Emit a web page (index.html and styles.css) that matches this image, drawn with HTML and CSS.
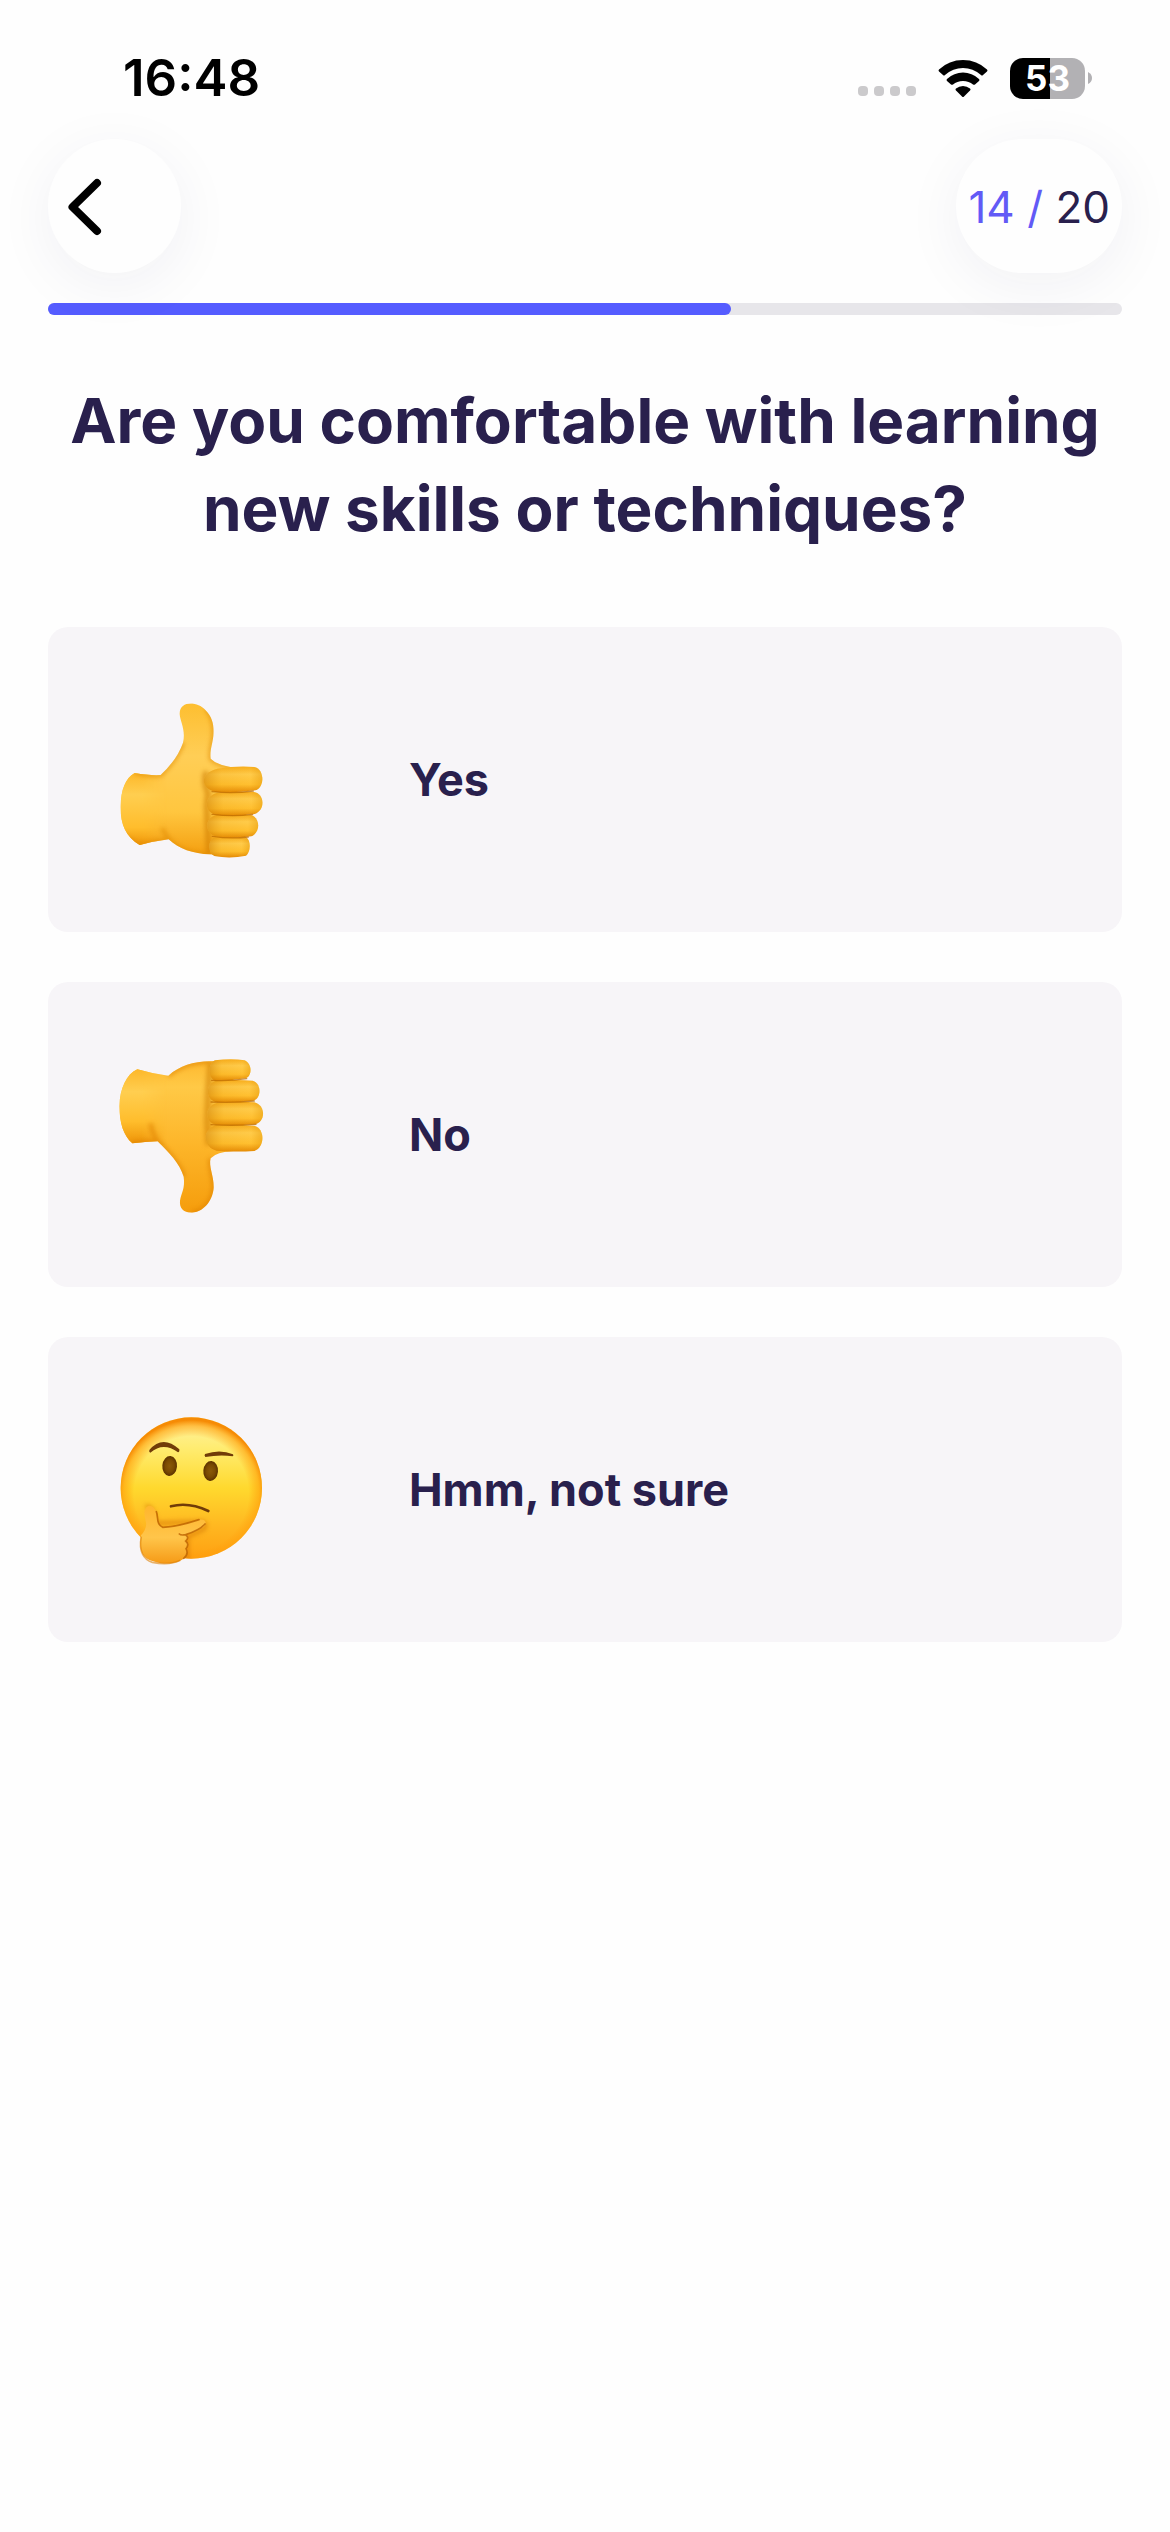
FILE: index.html
```html
<!DOCTYPE html>
<html lang="en">
<head>
<meta charset="utf-8">
<meta name="viewport" content="width=device-width, initial-scale=1">
<title>Question 14</title>
<link rel="stylesheet" href="styles.css">
</head>
<body>
<header class="status">
  <time class="clock">16:48</time>
  <div class="indicators">
    <span class="signal"><i class="dot"></i><i class="dot"></i><i class="dot"></i><i class="dot"></i></span>
    <svg class="wifi" viewBox="0 0 50 38" aria-hidden="true">
      <path d="M1 10.500Q0 11.500 1 12.500L5 16Q6 17 7 16Q15 9 25 9T43 16Q44 17 45 16L49 12.500Q50 11.500 49 10.500Q39 1 25 1T1 10.500Z"/>
      <path d="M9 20Q8 21 9 22L13 25.500Q14 26 15 25.500Q19 22 25 22T35 25.500Q36 26 37 25.500L41 22Q42 21 41 20Q34 13.500 25 13.500T9 20Z"/>
      <path d="M18 29.500Q17 30.500 18 31.500L24 37.500Q25 38.500 26 37.500L32 31.500Q33 30.500 32 29.500Q29 27 25 27T18 29.500Z"/>
    </svg>
    <span class="battery"><span class="level">53</span><svg class="nub" viewBox="0 0 4 12" aria-hidden="true"><path d="M0 0Q4 2 4 6T0 12Z"/></svg></span>
  </div>
</header>
<main class="page">
  <nav class="topbar">
    <button class="back" type="button" aria-label="Back">
      <svg class="chevron" viewBox="0 0 34 58" aria-hidden="true"><path d="M29 5 4.500 29 29 53"/></svg>
    </button>
    <p class="counter"><span class="current">14 /</span> 20</p>
  </nav>
  <div class="progress" role="progressbar" aria-label="Progress" aria-valuemin="0" aria-valuemax="11" aria-valuenow="7"><div class="fill" style="width:63.6%"></div></div>
  <h1 class="question">Are you comfortable with learning new skills or techniques?</h1>
  <div class="options">
    <button class="option" type="button">
      <svg class="emoji" viewBox="0 0 570 600" aria-hidden="true">
        <defs>
          <linearGradient id="skin" x1="0" y1="0" x2="0" y2="1"><stop offset="0" stop-color="#fdbd2e"/><stop offset=".35" stop-color="#ffce56"/><stop offset=".7" stop-color="#ffc63f"/><stop offset="1" stop-color="#f39a0a"/></linearGradient>
          <linearGradient id="cuff" gradientUnits="userSpaceOnUse" x1="0" y1="279" x2="0" y2="497"><stop offset="0" stop-color="#fdb82a"/><stop offset=".3" stop-color="#ffce50"/><stop offset=".75" stop-color="#ffbd2c"/><stop offset="1" stop-color="#ee9408"/></linearGradient>
          <linearGradient id="cuff-fade"><stop offset=".5" stop-color="#fff"/><stop offset="1" stop-color="#fff" stop-opacity="0"/></linearGradient>
          <mask id="cuff-mask"><path d="M50 60H200V540H50Z" fill="url(#cuff-fade)"/></mask>
          <linearGradient id="finger" x1="0" y1="0" x2="0" y2="1"><stop offset="0" stop-color="#f8ad1c"/><stop offset=".3" stop-color="#ffcb4a"/><stop offset=".7" stop-color="#ffbf2f"/><stop offset="1" stop-color="#e58a05"/></linearGradient>
          <linearGradient id="knuckle"><stop offset="0" stop-color="#c97800" stop-opacity=".5"/><stop offset=".3" stop-color="#e09000" stop-opacity=".12"/><stop offset=".8" stop-color="#e09000" stop-opacity="0"/><stop offset="1" stop-color="#e09000" stop-opacity=".4"/></linearGradient>
          <filter id="soft" filterUnits="userSpaceOnUse" x="0" y="0" width="570" height="600"><feGaussianBlur stdDeviation="7"/></filter>
          <clipPath id="palm-up"><path d="M104 279Q150 287 182 285Q232 238 249 188C258 150 240 124 239 102C238 62 292 63 316 90C340 114 342 140 340 168C337 195 329 212 332 236Q350 254 392 261L400 528L330 523C280 522 235 506 206 478Q160 484 119 495C76 468 61 432 62 378C63 330 76 294 104 279Z"/></clipPath>
        </defs>
        <g clip-path="url(#palm-up)">
          <path fill="url(#skin)" d="M50 60H410V540H50Z"/>
          <path fill="url(#cuff)" mask="url(#cuff-mask)" d="M50 270H200V500H50Z"/>
          <path fill="none" stroke="#df8800" stroke-width="12" opacity=".6" filter="url(#soft)" d="M104 277Q150 289 182 285Q232 238 249 188M318 85C340 114 342 140 340 168C337 195 329 212 332 236Q350 254 392 261M186 445Q204 480 232 500C265 522 300 523 335 525M70 470L119 495L206 478"/>
          <path fill="none" stroke="#ce7c00" stroke-width="18" opacity=".6" filter="url(#soft)" d="M320 275Q308 300 324 340L320 380L327 520"/>
        </g>
        <g fill="url(#finger)">
          <path d="M365 472H438C454 480 452 518 438 527Q390 537 343 528C324 520 323 482 340 474Z"/>
          <path d="M350 405H454C481 414 482 458 454 469Q400 477 345 469C312 455 314 413 350 405Z"/>
          <path d="M350 339Q410 332 462 336C494 341 497 391 464 402Q400 411 346 404C311 393 311 350 350 339Z"/>
          <path d="M352 266Q415 256 463 261C493 267 496 321 466 331Q400 340 346 336C299 323 299 279 352 266Z"/>
        </g>
        <g fill="url(#knuckle)">
          <path d="M365 472H438C454 480 452 518 438 527Q390 537 343 528C324 520 323 482 340 474Z"/>
          <path d="M350 405H454C481 414 482 458 454 469Q400 477 345 469C312 455 314 413 350 405Z"/>
          <path d="M350 339Q410 332 462 336C494 341 497 391 464 402Q400 411 346 404C311 393 311 350 350 339Z"/>
          <path d="M352 266Q415 256 463 261C493 267 496 321 466 331Q400 340 346 336C299 323 299 279 352 266Z"/>
        </g>
        <g fill="none" stroke="#bd6c00" stroke-width="4" stroke-linecap="round" opacity=".75"><path d="M336 335Q400 342 460 333M336 403Q400 411 458 403M337 469Q390 477 445 471"/></g>
      </svg>
      <span class="label">Yes</span>
    </button>
    <button class="option" type="button">
      <svg class="emoji" viewBox="0 0 570 600" aria-hidden="true">
        <defs>
          <linearGradient id="skin-down" x1="0" y1="0" x2="0" y2="1"><stop offset="0" stop-color="#fdb52a"/><stop offset=".2" stop-color="#ffc946"/><stop offset=".55" stop-color="#fdb62a"/><stop offset="1" stop-color="#f59c0b"/></linearGradient>
          <linearGradient id="cuff-down" gradientUnits="userSpaceOnUse" x1="0" y1="103" x2="0" y2="326"><stop offset="0" stop-color="#fdb82a"/><stop offset=".3" stop-color="#ffce50"/><stop offset=".7" stop-color="#ffbd2c"/><stop offset="1" stop-color="#ee9408"/></linearGradient>
          <clipPath id="palm-down"><path d="M112 103Q155 116 205 122C240 92 278 80 330 79L400 76L400 348Q350 350 332 370C325 394 342 423 341 457C340 488 318 530 276 533C248 533 238 517 240 497C243 475 256 461 251 425C240 387 207 352 173 319Q135 321 97 325C70 302 59 264 58 214C60 160 79 118 112 103Z"/></clipPath>
        </defs>
        <g clip-path="url(#palm-down)">
          <path fill="url(#skin-down)" d="M50 60H410V540H50Z"/>
          <path fill="url(#cuff-down)" mask="url(#cuff-mask)" d="M50 95H200V330H50Z"/>
          <path fill="none" stroke="#df8200" stroke-width="14" opacity=".6" filter="url(#soft)" d="M205 122C240 92 278 80 335 79M152 265Q155 294 173 319C207 352 240 387 251 425M332 370C325 394 342 423 341 457C340 488 318 530 276 533M97 325L173 319"/>
          <path fill="none" stroke="#ce7c00" stroke-width="20" opacity=".55" filter="url(#soft)" d="M332 85L325 160L322 260L326 330"/>
        </g>
        <g fill="url(#finger)">
          <path d="M345 76Q395 69 434 76C457 86 457 124 437 130Q390 138 345 137C324 130 322 86 345 76Z"/>
          <path d="M348 137Q410 133 458 137C486 146 484 190 460 197Q400 205 347 201C315 191 316 146 348 137Z"/>
          <path d="M350 204Q415 198 463 202C497 210 498 260 465 268Q400 274 347 269C313 260 313 213 350 204Z"/>
          <path d="M348 270Q410 268 463 272C495 280 496 337 463 348Q405 352 350 347C309 336 304 285 348 270Z"/>
        </g>
        <g fill="url(#knuckle)">
          <path d="M345 76Q395 69 434 76C457 86 457 124 437 130Q390 138 345 137C324 130 322 86 345 76Z"/>
          <path d="M348 137Q410 133 458 137C486 146 484 190 460 197Q400 205 347 201C315 191 316 146 348 137Z"/>
          <path d="M350 204Q415 198 463 202C497 210 498 260 465 268Q400 274 347 269C313 260 313 213 350 204Z"/>
          <path d="M348 270Q410 268 463 272C495 280 496 337 463 348Q405 352 350 347C309 336 304 285 348 270Z"/>
        </g>
        <g fill="none" stroke="#bd6c00" stroke-width="4" stroke-linecap="round" opacity=".75"><path d="M335 136Q390 139 440 131M333 201Q400 204 463 198M333 269Q400 273 468 268"/></g>
      </svg>
      <span class="label">No</span>
    </button>
    <button class="option" type="button">
      <svg class="emoji" viewBox="0 -15 570 600" aria-hidden="true">
        <defs>
          <linearGradient id="face" x1="0" y1="0" x2="0" y2="1"><stop offset="0" stop-color="#fff3a6"/><stop offset=".22" stop-color="#ffec70"/><stop offset=".5" stop-color="#ffd92e"/><stop offset=".78" stop-color="#ffb620"/><stop offset="1" stop-color="#ffa010"/></linearGradient>
          <radialGradient id="rim" cx=".5" cy=".54" r=".52"><stop offset=".78" stop-color="#ff9a08" stop-opacity="0"/><stop offset=".92" stop-color="#ff9f0c" stop-opacity=".6"/><stop offset="1" stop-color="#f68b05"/></radialGradient>
          <linearGradient id="hand" x1="0" y1="0" x2="0" y2="1"><stop offset="0" stop-color="#ffb52c"/><stop offset=".55" stop-color="#ffc54a"/><stop offset="1" stop-color="#f69a16"/></linearGradient>
          <radialGradient id="eye"><stop offset="0" stop-color="#8a5908"/><stop offset=".6" stop-color="#7a4a02"/><stop offset="1" stop-color="#5c3200"/></radialGradient>
          <clipPath id="disc"><circle cx="274" cy="279" r="212"/></clipPath>
        </defs>
        <circle cx="274" cy="279" r="212" fill="url(#face)"/>
        <circle cx="274" cy="279" r="212" fill="url(#rim)"/>
        <g clip-path="url(#disc)"><path d="M136 335Q160 330 168 385L300 380Q325 382 312 402L262 426V500" fill="none" stroke="#cc6a00" stroke-width="12" opacity=".5" filter="url(#soft)"/></g>
        <path d="M148 165Q188 118 238 163Q239 172 234 172Q190 139 151 173Q146 172 148 165ZM315 177Q360 161 399 178Q402 182 398 184Q360 178 316 186Q312 182 315 177Z" fill="#713c08"/>
        <ellipse cx="209" cy="213" rx="22" ry="30" transform="rotate(5 209 213)" fill="url(#eye)"/>
        <ellipse cx="332" cy="228" rx="22" ry="30" transform="rotate(5 332 228)" fill="url(#eye)"/>
        <path d="M213 334Q266 320 325 348" fill="none" stroke="#713c08" stroke-width="8" stroke-linecap="round"/>
        <path d="M138 338C148 326 162 333 167 348C174 367 166 386 188 397Q230 397 297 374C322 370 322 391 307 398Q284 411 257 418Q270 425 258 438Q269 448 258 461Q267 478 252 490C228 513 169 509 139 490C119 475 117 444 123 421Q143 400 137 378C134 362 130 350 138 338Z" fill="url(#hand)"/>
        <path d="M169 350C176 367 167 386 188 397Q230 396 297 374M315 387Q300 405 257 419Q243 422 238 417M257 420Q269 427 257 438Q269 448 258 461Q267 478 251 490" fill="none" stroke="#bb6200" stroke-width="5" stroke-linecap="round" opacity=".8"/>
        <path d="M124 425C115 470 132 495 157 502Q208 512 241 496" fill="none" stroke="#dd8208" stroke-width="5" opacity=".6"/>
      </svg>
      <span class="label">Hmm, not sure</span>
    </button>
  </div>
</main>
</body>
</html>
```
FILE: styles.css
```css
* { box-sizing: border-box; }

body {
  margin: 0;
  min-height: 100vh;
  background: #fefefe;
  color: #29204d;
  font-family: Inter, "Liberation Sans", sans-serif;
}

button {
  border: 0;
  color: inherit;
  font: inherit;
  cursor: pointer;
}

svg { display: block; }

.status {
  display: flex;
  align-items: center;
  justify-content: space-between;
  height: 139px;
  padding: 17px 78px 0 123px;
  color: #000;
}

.clock {
  font-size: 51px;
  font-weight: 600;
  line-height: 60px;
}

.indicators {
  display: flex;
  align-items: center;
  gap: 22px;
}

.signal {
  display: flex;
  gap: 6px;
  padding-top: 26px;
}

.dot {
  width: 10px;
  height: 10px;
  border-radius: 4px;
  background: #cbcacc;
}

.wifi {
  width: 50px;
  height: 38px;
}

.battery {
  display: flex;
  align-items: center;
  gap: 3px;
}

.level {
  width: 75px;
  border-radius: 13px;
  background: linear-gradient(to right, #000 53%, #b2b1b4 53%);
  color: #fff;
  font-size: 35px;
  font-weight: 700;
  line-height: 41px;
  text-align: center;
}

.nub {
  width: 4px;
  height: 12px;
  fill: #b2b1b4;
}

.page { padding: 0 48px 48px; }

.topbar {
  display: flex;
  justify-content: space-between;
}

.back,
.counter {
  height: 134px;
  border-radius: 67px;
  background: #fefefe;
  box-shadow: 0 12px 60px rgba(41, 32, 77, 0.06);
}

.back {
  width: 133px;
  padding: 2px 20px 0;
}

.chevron {
  width: 34px;
  height: 58px;
  fill: none;
  stroke: #000;
  stroke-width: 8;
  stroke-linecap: round;
  stroke-linejoin: round;
}

.counter {
  margin: 0;
  padding: 0 12px;
  font-size: 44px;
  line-height: 136px;
}

.current { color: #625af6; }

.progress {
  height: 12px;
  margin-top: 30px;
  border-radius: 6px;
  background: rgba(41, 32, 77, 0.11);
}

.fill {
  height: 100%;
  border-radius: 6px;
  background: #555cff;
}

.question {
  margin: 62px 0 74px;
  font-size: 62px;
  font-weight: 700;
  line-height: 88px;
  text-align: center;
}

.options {
  display: grid;
  gap: 50px;
}

.option {
  display: grid;
  grid-template-columns: 361px 1fr;
  align-items: center;
  height: 305px;
  padding: 0;
  border-radius: 20px;
  background: #f7f5f8;
  text-align: left;
}

.emoji {
  width: 190px;
  height: 200px;
  margin-left: 52px;
}

.label {
  font-size: 45px;
  font-weight: 700;
  line-height: 60px;
}
```
